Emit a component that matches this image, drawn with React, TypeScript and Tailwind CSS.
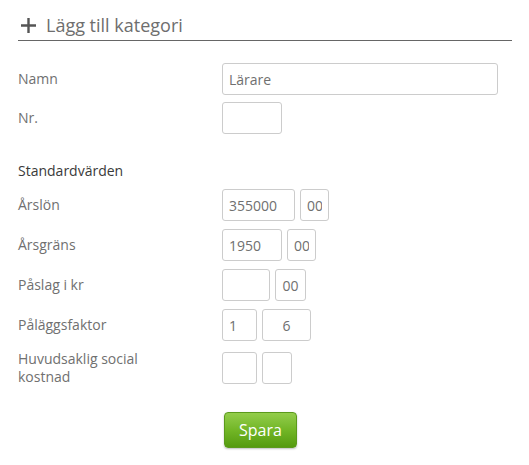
// Lägg till kategori: category form with default values

const font = { fontFamily: '"Open Sans", "Noto Sans", sans-serif' };

function Box({ value = "", width, center = false }: { value?: string; width: number; center?: boolean }) {
  return (
    <input
      readOnly
      className={`h-[32px] rounded-[3px] border border-[#cccccc] bg-white px-[6px] text-[14px] text-[#707070] outline-none ${center ? "text-center" : "text-left"}`}
      style={{ width }}
      value={value}
    />
  );
}

function Row({ label, children, tall = false }: { label: string; children: React.ReactNode; tall?: boolean }) {
  return (
    <div className={`flex items-center ${tall ? "h-[36px]" : "h-[32px]"}`}>
      <div className="w-[204px] shrink-0">
        <div className="max-w-[160px] text-[14px] leading-[18px] text-[#707070]">{label}</div>
      </div>
      <div className="flex gap-[5px]">{children}</div>
    </div>
  );
}

export default function App() {
  return (
    <div className="min-h-[465px] w-[529px] bg-white" style={font}>
      <div className="ml-[18px] w-[494px] pt-[13px]">
        <div className="flex items-center border-b border-[#666666] pb-[3px] text-[18px] leading-[24px] text-[#6e6e6e]">
          <svg className="ml-[3px] mr-[10px]" width="15" height="15" viewBox="0 0 15 15" aria-hidden>
            <path d="M7.5 0v15M0 7.5h15" stroke="#555555" strokeWidth="2.4" />
          </svg>
          <span>Lägg till kategori</span>
        </div>

        <div className="mt-[22px] flex flex-col gap-[7px]">
          <Row label="Namn">
            <Box value="Lärare" width={276} />
          </Row>
          <Row label="Nr.">
            <Box width={60} />
          </Row>
        </div>

        <div className="mt-[27px] text-[14px] leading-[20px] text-[#3a3a3a]">Standardvärden</div>

        <div className="mt-[8px] flex flex-col gap-[8px]">
          <Row label="Årslön">
            <Box value="355000" width={73} />
            <Box value="00" width={29} center />
          </Row>
          <Row label="Årsgräns">
            <Box value="1950" width={60} />
            <Box value="00" width={29} center />
          </Row>
          <Row label="Påslag i kr">
            <Box width={48} />
            <Box value="00" width={31} center />
          </Row>
          <Row label="Påläggsfaktor">
            <Box value="1" width={35} />
            <Box value="6" width={49} center />
          </Row>
          <div className="mt-[1px]">
            <Row label="Huvudsaklig social kostnad" tall>
              <Box width={35} />
              <Box width={30} />
            </Row>
          </div>
        </div>

        <div className="mt-[26px] pl-[206px]">
          <button
            type="button"
            className="h-[36px] w-[73px] rounded-[4px] border border-[#5b9a1c] bg-gradient-to-b from-[#93cd4a] via-[#72b626] to-[#559b0e] text-[16px] text-white shadow-[0_1px_2px_rgba(0,0,0,0.25)]"
          >
            Spara
          </button>
        </div>
      </div>
    </div>
  );
}
